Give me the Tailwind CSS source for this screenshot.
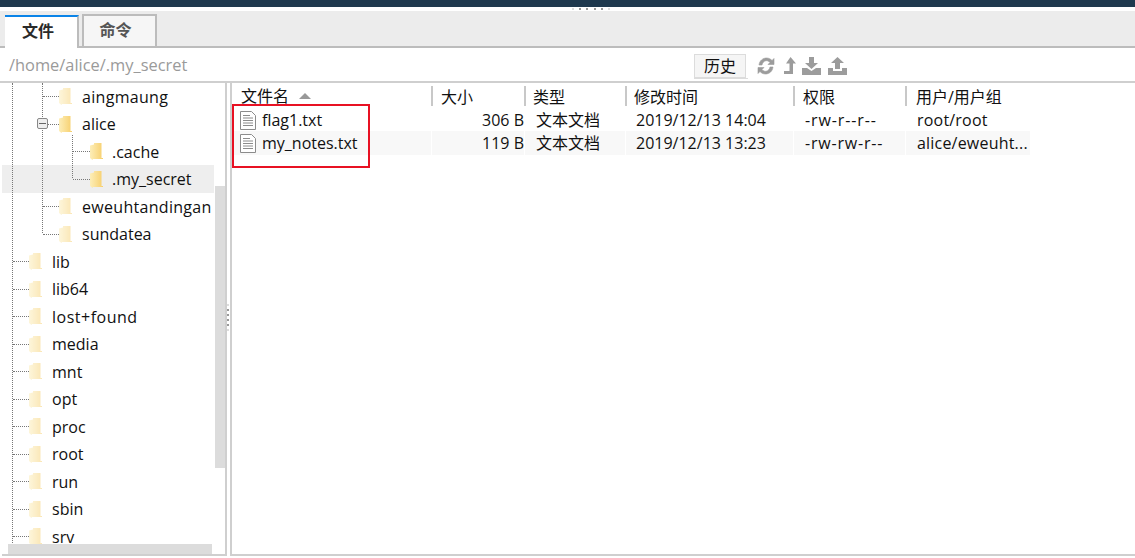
<!DOCTYPE html>
<html lang="zh">
<head>
    <meta charset="UTF-8">
    <title>文件</title>
    <script src="https://cdn.jsdelivr.net/npm/@tailwindcss/browser@4"></script>
</head>
<body class="bg-white overflow-hidden font-['Open_Sans','Noto_Sans_CJK_SC',sans-serif] text-[16px] text-[#111]">
<svg width="0" height="0" class="absolute">
    <defs>
        <linearGradient id="fold" x1="0" y1="0" x2="1" y2="0">
            <stop offset="0" stop-color="#fdeeb8"/>
            <stop offset="1" stop-color="#f7cf6c"/>
        </linearGradient>
        <symbol id="folder" viewBox="0 0 13 17">
            <path d="M0 2.5 4 1.5V0H11.5V15H13V16H3L2.5 17 0 15Z" fill="url(#fold)"/>
        </symbol>
        <symbol id="doc" viewBox="0 0 16 19">
            <path d="M.5.5H11.5L15.5 4.5V18.5H.5Z" fill="#fff" stroke="#8c8c8c"/>
            <path d="M3 4.500H10M3 7H13M3 9.500H13M3 12H13M3 14.500H13" stroke="#8c8c8c"/>
        </symbol>
    </defs>
</svg>
<div class="flex flex-col w-[1135px] h-[558px] relative">
    <!-- top strip -->
    <div class="h-[7px] bg-[#1f394e]"></div>
    <div class="h-[4px] flex justify-center items-start gap-[5.4px] pl-[47px]">
        <i class="w-[2px] h-[2px] mt-[1px] bg-[#ddd]"></i><i class="w-[2px] h-[2px] mt-[1px] bg-[#999]"></i><i class="w-[2px] h-[2px] mt-[1px] bg-[#999]"></i><i class="w-[2px] h-[2px] mt-[1px] bg-[#999]"></i><i class="w-[2px] h-[2px] mt-[1px] bg-[#999]"></i><i class="w-[2px] h-[2px] mt-[1px] bg-[#ddd]"></i>
    </div>

    <!-- tabs -->
    <div class="h-[37px] bg-[#ececec] border-b-2 border-[#bcbcbc] flex items-end pl-[5px] gap-[3px]">
        <div class="w-[74px] h-[33px] -mb-[2px] pb-[3px] pr-[6px] bg-white border-t-2 border-t-[#0a84e8] border-r-2 border-r-[#bcbcbc] flex items-center justify-center font-bold text-[#2a2a2a]">文件</div>
        <div class="w-[75px] h-[32px] pb-[3px] pr-[8px] bg-[#f6f6f6] border-2 border-b-0 border-[#bcbcbc] flex items-center justify-center font-bold text-[#555]">命令</div>
    </div>

    <!-- path row -->
    <div class="h-[35px] border-b-2 border-[#cfcfcf] flex items-center pl-[9px] relative">
        <span class="w-[685px] text-[#9a9a9a] text-[16.4px] leading-none mt-[1px]">/home/alice/.my_secret</span>
        <button class="w-[52px] h-[24px] mt-[3px] bg-[#f5f5f5] border border-[#dcdcdc] flex items-center justify-center text-[16px]">历史</button>
        <svg class="ml-[11px] mt-[3px]" width="18" height="18" viewBox="0 0 18 18" fill="#9c9c9c" stroke="#9c9c9c" stroke-width=".6">
            <path d="M2 8C2.500 3.500 6 1 9.500 1 12 1 13.800 2.200 15 3.500L17 1.500V7.500H11L13 5.500C12 4.300 10.800 3.700 9.300 3.700 7.200 3.700 5.500 5.500 5 8Z"/>
            <path d="M16 10C15.500 14.500 12 17 8.500 17 6 17 4.200 15.800 3 14.500L1 16.500V10.500H7L5 12.500C6 13.700 7.200 14.300 8.700 14.300 10.800 14.300 12.500 12.500 13 10Z"/>
        </svg>
        <svg class="ml-[9px] mt-[3px]" width="12" height="18" viewBox="0 0 12 18" fill="#9c9c9c">
            <path d="M6.500 0 12 6.500H9V17H0V14H5.500V6.500H2Z"/>
        </svg>
        <svg class="ml-[6px] mt-[3px]" width="19" height="18" viewBox="0 0 19 18" fill="#9c9c9c">
            <path d="M7 0H12V6H16L9.500 12 3 6H7Z"/>
            <path d="M0 11H5L9.500 14 14 11H19V18H0Z"/>
        </svg>
        <svg class="ml-[7px] mt-[3px]" width="19" height="18" viewBox="0 0 19 18" fill="#9c9c9c">
            <path d="M9.500 0 16 6H12V12H7V6H3Z"/>
            <path d="M0 11H5V14H14V11H19V18H0Z"/>
        </svg>
        <div class="absolute left-[694px] top-[30px] w-[54px] h-px bg-[#dcdcdc]"></div>
    </div>

    <div class="flex h-[473px]">
        <!-- tree -->
        <div class="w-[225px] ml-[2px] -mr-[1px] h-[473px] shrink-0 border-r-2 border-b-2 border-[#cfcfcf] relative overflow-hidden">
            <div class="absolute left-[10px] top-0 h-[460px] border-l border-dotted border-[#777]"></div>
            <div class="absolute left-[40px] top-0 h-[150px] border-l border-dotted border-[#777]"></div>
            <div class="absolute left-[70px] top-[52px] h-[43px] border-l border-dotted border-[#777]"></div>

            <div class="-mt-[0.25px]"></div>
            <div class="h-[27.5px] flex items-center pl-[41px]"><i class="w-[16px] border-t border-dotted border-[#777]"></i><svg class="w-[13px] h-[17px] opacity-50"><use href="#folder"/></svg><span class="ml-[10px] tracking-[0.3px]">aingmaung</span></div>
            <div class="h-[27.5px] flex items-center pl-[41px] relative">
                <i class="absolute left-[35px] top-[8px] w-[11px] h-[11px] bg-[#eee] border border-[#888] rounded-[2px] flex items-center justify-center"><b class="w-[7px] h-px bg-[#666]"></b></i>
                <i class="w-[16px] border-t border-dotted border-[#777]"></i><svg class="w-[13px] h-[17px]"><use href="#folder"/></svg><span class="ml-[10px]">alice</span>
            </div>
            <div class="h-[27.5px] flex items-center pl-[71px]"><i class="w-[17px] border-t border-dotted border-[#777]"></i><svg class="w-[13px] h-[17px]"><use href="#folder"/></svg><span class="ml-[9px]">.cache</span></div>
            <div class="h-[27.5px] flex items-center pl-[71px] bg-[#eeeeee] mr-[11px]"><i class="w-[17px] border-t border-dotted border-[#777]"></i><svg class="w-[13px] h-[17px]"><use href="#folder"/></svg><span class="ml-[9px]">.my_secret</span></div>
            <div class="h-[27.5px] flex items-center pl-[41px]"><i class="w-[16px] border-t border-dotted border-[#777]"></i><svg class="w-[13px] h-[17px] opacity-50"><use href="#folder"/></svg><span class="ml-[10px] tracking-[0.3px]">eweuhtandingan</span></div>
            <div class="h-[27.5px] flex items-center pl-[41px]"><i class="w-[16px] border-t border-dotted border-[#777]"></i><svg class="w-[13px] h-[17px] opacity-50"><use href="#folder"/></svg><span class="ml-[10px]">sundatea</span></div>
            <div class="h-[27.5px] flex items-center pl-[11px]"><i class="w-[16px] border-t border-dotted border-[#777]"></i><svg class="w-[13px] h-[17px] opacity-50"><use href="#folder"/></svg><span class="ml-[10px]">lib</span></div>
            <div class="h-[27.5px] flex items-center pl-[11px]"><i class="w-[16px] border-t border-dotted border-[#777]"></i><svg class="w-[13px] h-[17px] opacity-50"><use href="#folder"/></svg><span class="ml-[10px]">lib64</span></div>
            <div class="h-[27.5px] flex items-center pl-[11px]"><i class="w-[16px] border-t border-dotted border-[#777]"></i><svg class="w-[13px] h-[17px] opacity-50"><use href="#folder"/></svg><span class="ml-[10px] tracking-[0.5px]">lost+found</span></div>
            <div class="h-[27.5px] flex items-center pl-[11px]"><i class="w-[16px] border-t border-dotted border-[#777]"></i><svg class="w-[13px] h-[17px] opacity-50"><use href="#folder"/></svg><span class="ml-[10px]">media</span></div>
            <div class="h-[27.5px] flex items-center pl-[11px]"><i class="w-[16px] border-t border-dotted border-[#777]"></i><svg class="w-[13px] h-[17px] opacity-50"><use href="#folder"/></svg><span class="ml-[10px]">mnt</span></div>
            <div class="h-[27.5px] flex items-center pl-[11px]"><i class="w-[16px] border-t border-dotted border-[#777]"></i><svg class="w-[13px] h-[17px] opacity-50"><use href="#folder"/></svg><span class="ml-[10px]">opt</span></div>
            <div class="h-[27.5px] flex items-center pl-[11px]"><i class="w-[16px] border-t border-dotted border-[#777]"></i><svg class="w-[13px] h-[17px] opacity-50"><use href="#folder"/></svg><span class="ml-[10px]">proc</span></div>
            <div class="h-[27.5px] flex items-center pl-[11px]"><i class="w-[16px] border-t border-dotted border-[#777]"></i><svg class="w-[13px] h-[17px] opacity-50"><use href="#folder"/></svg><span class="ml-[10px]">root</span></div>
            <div class="h-[27.5px] flex items-center pl-[11px]"><i class="w-[16px] border-t border-dotted border-[#777]"></i><svg class="w-[13px] h-[17px] opacity-50"><use href="#folder"/></svg><span class="ml-[10px]">run</span></div>
            <div class="h-[27.5px] flex items-center pl-[11px]"><i class="w-[16px] border-t border-dotted border-[#777]"></i><svg class="w-[13px] h-[17px] opacity-50"><use href="#folder"/></svg><span class="ml-[10px]">sbin</span></div>
            <div class="h-[27.5px] flex items-center pl-[11px]"><i class="w-[16px] border-t border-dotted border-[#777]"></i><svg class="w-[13px] h-[17px] opacity-50"><use href="#folder"/></svg><span class="ml-[10px]">srv</span></div>

            <!-- scrollbars -->
            <div class="absolute left-[213px] top-[103px] w-[10px] h-[282px] bg-[#dcdcdc]"></div>
            <div class="absolute left-[6px] bottom-0 w-[204px] h-[10px] bg-[#dcdcdc]"></div>
        </div>

        <!-- splitter -->
        <div class="w-[4px] shrink-0 flex flex-col items-center justify-center gap-[3px] pb-[4px]">
            <i class="w-[2px] h-[2px] bg-[#ddd]"></i><i class="w-[2px] h-[2px] bg-[#999]"></i><i class="w-[2px] h-[2px] bg-[#999]"></i><i class="w-[2px] h-[2px] bg-[#999]"></i><i class="w-[2px] h-[2px] bg-[#999]"></i><i class="w-[2px] h-[2px] bg-[#ddd]"></i>
        </div>

        <!-- file list -->
        <div class="flex-1 h-[473px] border-l-2 border-b-2 border-[#cfcfcf]">
            <div class="grid grid-cols-[199px_93px_101px_168px_112px_125px] h-[25px] pt-[3px] text-[16px] leading-[22px]">
                <div class="pl-[9px] flex items-center gap-[10px] h-[20px]">文件名<svg width="12" height="6" viewBox="0 0 12 6" fill="#999"><path d="M6 0 12 6H0Z"/></svg></div>
                <div class="border-l-2 border-[#c8c8c8] pl-[8px] h-[20px]">大小</div>
                <div class="border-l-2 border-[#c8c8c8] pl-[7px] h-[20px]">类型</div>
                <div class="border-l-2 border-[#c8c8c8] pl-[7px] h-[20px]">修改时间</div>
                <div class="border-l-2 border-[#c8c8c8] pl-[8px] h-[20px]">权限</div>
                <div class="border-l-2 border-[#c8c8c8] pl-[9px] h-[20px]">用户/用户组</div>
            </div>
            <div class="h-[23px] grid grid-cols-[199px_93px_101px_168px_112px_125px] items-center">
                <div class="pl-[8px] flex items-center"><svg class="w-[16px] h-[19px]"><use href="#doc"/></svg><span class="ml-[6px]">flag1.txt</span></div>
                <div class="text-right">306 B</div>
                <div class="pl-[12px]">文本文档</div>
                <div class="pl-[11px]">2019/12/13 14:04</div>
                <div class="pl-[12px] tracking-[0.9px]">-rw-r--r--</div>
                <div class="pl-[12px] tracking-[0.2px]">root/root</div>
            </div>
            <div class="h-[22px] grid grid-cols-[199px_93px_101px_168px_112px_125px] items-center">
                <div class="h-full bg-[#f8f8f8] pl-[8px] flex items-center"><svg class="w-[16px] h-[19px]"><use href="#doc"/></svg><span class="ml-[6px]">my_notes.txt</span></div>
                <div class="h-full bg-[#f8f8f8] ml-px flex items-center justify-end">119 B</div>
                <div class="h-full bg-[#f8f8f8] ml-px flex items-center pl-[11px]">文本文档</div>
                <div class="h-full bg-[#f8f8f8] ml-px flex items-center pl-[10px]">2019/12/13 13:23</div>
                <div class="h-full bg-[#f8f8f8] ml-px flex items-center pl-[11px] tracking-[0.8px]">-rw-rw-r--</div>
                <div class="h-full bg-[#f8f8f8] ml-px flex items-center pl-[11px] whitespace-nowrap tracking-[0.2px]">alice/eweuht...</div>
            </div>
        </div>
    </div>

    <!-- annotation -->
    <div class="absolute left-[232px] top-[104px] w-[138px] h-[64px] border-2 border-[#e81123]"></div>
</div>
</body>
</html>
